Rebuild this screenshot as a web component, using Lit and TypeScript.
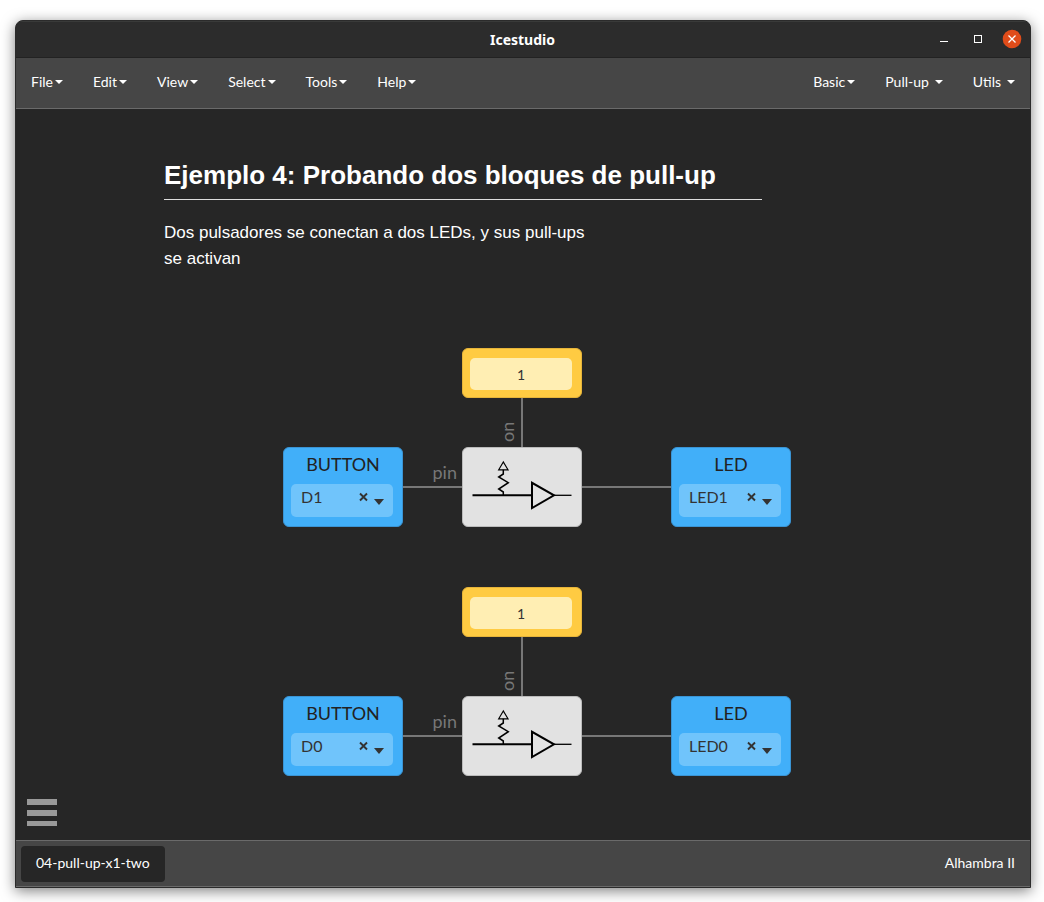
import { LitElement, html, css, svg } from "lit";
import { customElement, property } from "lit/decorators.js";
import { styleMap } from "lit/directives/style-map.js";

interface Circuit {
  constantY: number;
  rowY: number;
  button: string;
  led: string;
}

const CIRCUITS: Circuit[] = [
  { constantY: 239, rowY: 338, button: "D1", led: "LED1" },
  { constantY: 478, rowY: 587, button: "D0", led: "LED0" },
];

const box = (left: number, top: number, width: number, height: number) =>
  styleMap({
    left: `${left}px`,
    top: `${top}px`,
    width: `${width}px`,
    height: `${height}px`,
  });

@customElement("menu-item")
class MenuItem extends LitElement {
  @property() label = "";
  @property({ type: Boolean, reflect: true }) spaced = false;

  static styles = css`
    :host {
      display: flex;
    }
    .item {
      display: flex;
      align-items: center;
      gap: 2px;
      padding: 0 15px 2px;
      border: 0;
      background: none;
      color: #fff;
      font: 14px/20px Lato, sans-serif;
      cursor: pointer;
    }
    :host([spaced]) .item {
      gap: 6px;
    }
    .caret {
      border: 4px solid transparent;
      border-top-color: #fff;
      border-bottom: 0;
    }
  `;

  render() {
    return html`<button class="item" type="button" aria-haspopup="true">
      <span>${this.label}</span><span class="caret"></span>
    </button>`;
  }
}

@customElement("io-block")
class IoBlock extends LitElement {
  @property() label = "";
  @property() value = "";

  static styles = css`
    :host {
      display: flex;
      flex-direction: column;
      box-sizing: border-box;
      padding: 3px 10px 9px 8px;
      border: 1px solid #3a94d4;
      border-radius: 6px;
      background: #41aff9;
      color: #222;
    }
    .title {
      padding-left: 2px;
      text-align: center;
      font: 18px/26px Lato, sans-serif;
    }
    .picker {
      display: grid;
      flex: 1;
      margin: 7px -1px 0 -1px;
    }
    .pins {
      grid-area: 1 / 1;
      appearance: none;
      width: 100%;
      padding: 0 40px 8px 10px;
      border: 0;
      border-radius: 5px;
      background: #70c4fb;
      color: #333;
      font: 16px/20px Lato, sans-serif;
    }
    .tools {
      grid-area: 1 / 1;
      display: flex;
      justify-self: end;
      align-items: flex-start;
      gap: 5px;
      padding: 8px 9px 0 0;
      pointer-events: none;
    }
    .clear {
      display: flex;
      padding: 0;
      border: 0;
      background: none;
      pointer-events: auto;
    }
    .arrow {
      padding-top: 7px;
    }
  `;

  render() {
    return html`
      <label class="title" for="pins">${this.label}</label>
      <div class="picker">
        <select class="pins" id="pins">
          <option>${this.value}</option>
        </select>
        <div class="tools">
          <button class="clear" type="button" aria-label="Clear">
            <svg width="10" height="10" viewBox="0 0 10 10">
              <path d="M1 1.500 8 8.500M8 1.500 1 8.500" stroke="#333" stroke-width="1.900" />
            </svg>
          </button>
          <svg class="arrow" width="10" height="6" viewBox="0 0 10 6">
            <path d="M0 0H10L5 6Z" fill="#333" />
          </svg>
        </div>
      </div>
    `;
  }
}

@customElement("app-root")
class AppRoot extends LitElement {
  static styles = css`
    :host {
      display: flex;
      box-sizing: border-box;
      min-height: 100vh;
      padding: 20px 13px 14px 15px;
      background: #fff;
      font: 14px/20px Lato, sans-serif;
      color: #fff;
    }
    .window {
      display: flex;
      flex: 1;
      flex-direction: column;
      min-width: 0;
      overflow: hidden;
      border: 1px solid #2b2b2b;
      border-radius: 8px 8px 0 0;
      background: #262626;
      box-shadow: 0 3px 14px rgba(0, 0, 0, 0.5);
    }
    .titlebar {
      display: grid;
      grid-template-columns: 1fr auto 1fr;
      align-items: center;
      height: 35px;
      padding-right: 8px;
      border-top: 1px solid #393a39;
      border-bottom: 1px solid #222;
      background: #2c2c2c;
    }
    .name {
      grid-column: 2;
      margin: 0;
      padding-left: 7px;
      font: bold 14px/20px "Noto Sans", sans-serif;
    }
    .controls {
      display: flex;
      justify-content: flex-end;
      gap: 14px;
      padding-bottom: 2px;
    }
    .control {
      display: flex;
      padding: 0;
      border: 0;
      background: none;
    }
    .menubar {
      display: flex;
      justify-content: space-between;
      height: 50px;
      border-bottom: 1px solid #6a6a6a;
      background: #464646;
    }
    .menus {
      display: flex;
    }
    .canvas {
      position: relative;
      flex: 1;
      min-height: 700px;
    }
    .note {
      position: absolute;
      font-family: "Liberation Sans", Arial, sans-serif;
    }
    .heading {
      margin: 0 0 20px;
      padding-bottom: 8px;
      border-bottom: 1px solid #ddd;
      font-size: 26px;
      line-height: 32px;
    }
    .text {
      width: 435px;
      margin: 0;
      font-size: 17px;
      line-height: 26px;
    }
    .wire,
    .block,
    .port {
      position: absolute;
      box-sizing: border-box;
    }
    .wire {
      background: #777;
    }
    .port {
      color: #777;
      font-size: 18px;
      line-height: 20px;
      text-align: right;
    }
    .up {
      writing-mode: vertical-rl;
      rotate: 180deg;
      text-align: left;
    }
    .constant {
      padding: 9px 9px 7px 7px;
      border: 1px solid #e6b43a;
      border-radius: 6px;
      background: #ffcb42;
    }
    .number {
      box-sizing: border-box;
      width: 100%;
      height: 100%;
      padding: 0;
      border: 0;
      border-radius: 5px;
      background: #ffeeb3;
      color: #333;
      text-align: center;
      font: 14px/20px Lato, sans-serif;
    }
    .code {
      border: 1px solid #bbb;
      border-radius: 6px;
      background: #e2e2e2;
    }
    .drawing {
      display: block;
      margin: -1px;
    }
    .toggle {
      position: absolute;
      left: 11px;
      bottom: 14px;
      display: flex;
      flex-direction: column;
      gap: 5px;
      width: 30px;
      padding: 0;
      border: 0;
      background: none;
    }
    .bar {
      width: 30px;
      height: 6px;
      background: #999;
    }
    .bar:last-child {
      height: 5px;
    }
    .status {
      display: flex;
      align-items: center;
      justify-content: space-between;
      padding: 5px 15px 4px 5px;
      border-top: 1px solid #6a6a6a;
      border-bottom: 1px solid #6a6a6a;
      background: #464646;
    }
    .tab {
      padding: 7px 15px 9px;
      border: 0;
      border-radius: 4px;
      background: #262626;
      color: #fff;
      font: 14px/20px Lato, sans-serif;
    }
    .board {
      padding-bottom: 2px;
    }
  `;

  private symbol() {
    return svg`
      <g fill="none" stroke="#000">
        <path d="M10.500 48.300H70" stroke-width="2" />
        <path d="M92 48.300H109.500" stroke-width="1.300" />
        <path d="M70 35.800V61L92 48.300Z" stroke-width="2" />
        <path d="M41.300 15 36.700 22.800H46Z" stroke-width="1.200" />
        <path d="M41.300 22.800V27L36.700 30 46.300 35.700 36.700 42 41.300 45V48" stroke-width="1.500" />
      </g>`;
  }

  private circuit(c: Circuit) {
    const wireY = c.rowY + 39;
    return html`
      <div class="wire" style=${box(505, c.constantY + 49, 2, c.rowY - c.constantY - 48)}></div>
      <div class="wire" style=${box(386, wireY, 61, 2)}></div>
      <div class="wire" style=${box(565, wireY, 91, 2)}></div>
      <div class="port" style=${box(391, c.rowY + 15, 50, 20)}>pin</div>
      <div class="port up" style=${box(481, c.rowY - 55, 20, 50)}>on</div>
      <div class="block constant" style=${box(446, c.constantY, 120, 50)}>
        <input class="number" value="1" aria-label="Constant value" />
      </div>
      <io-block class="block" label="BUTTON" .value=${c.button} style=${box(267, c.rowY, 120, 80)}></io-block>
      <div class="block code" style=${box(446, c.rowY, 120, 80)}>
        <svg class="drawing" width="120" height="80" viewBox="0 0 120 80">${this.symbol()}</svg>
      </div>
      <io-block class="block" label="LED" .value=${c.led} style=${box(655, c.rowY, 120, 80)}></io-block>
    `;
  }

  render() {
    return html`
      <div class="window">
        <header class="titlebar">
          <h1 class="name">Icestudio</h1>
          <div class="controls">
            <button class="control" type="button" aria-label="Minimize">
              <svg width="20" height="20" viewBox="0 0 20 20"><path d="M6 12.500H14" stroke="#fff" /></svg>
            </button>
            <button class="control" type="button" aria-label="Maximize">
              <svg width="20" height="20" viewBox="0 0 20 20"><rect x="6.500" y="6.500" width="7" height="7" fill="none" stroke="#fff" /></svg>
            </button>
            <button class="control" type="button" aria-label="Close">
              <svg width="20" height="20" viewBox="0 0 20 20">
                <circle cx="10" cy="10" r="9.300" fill="#e04c1a" />
                <path d="M6.500 6.500 13.500 13.500M13.500 6.500 6.500 13.500" stroke="#fff" stroke-width="1.300" />
              </svg>
            </button>
          </div>
        </header>
        <nav class="menubar">
          <div class="menus">
            ${["File", "Edit", "View", "Select", "Tools", "Help"].map(
              (label) => html`<menu-item .label=${label}></menu-item>`
            )}
          </div>
          <div class="menus">
            <menu-item label="Basic"></menu-item>
            <menu-item label="Pull-up" spaced></menu-item>
            <menu-item label="Utils" spaced></menu-item>
          </div>
        </nav>
        <main class="canvas">
          <section class="note" style=${styleMap({ left: "148px", top: "50px", width: "598px" })}>
            <h2 class="heading">Ejemplo 4: Probando dos bloques de pull-up</h2>
            <p class="text">Dos pulsadores se conectan a dos LEDs, y sus pull-ups se activan</p>
          </section>
          ${CIRCUITS.map((c) => this.circuit(c))}
          <button class="toggle" type="button" aria-label="Toggle panel">
            <span class="bar"></span><span class="bar"></span><span class="bar"></span>
          </button>
        </main>
        <footer class="status">
          <button class="tab" type="button">04-pull-up-x1-two</button>
          <span class="board">Alhambra II</span>
        </footer>
      </div>
    `;
  }
}
